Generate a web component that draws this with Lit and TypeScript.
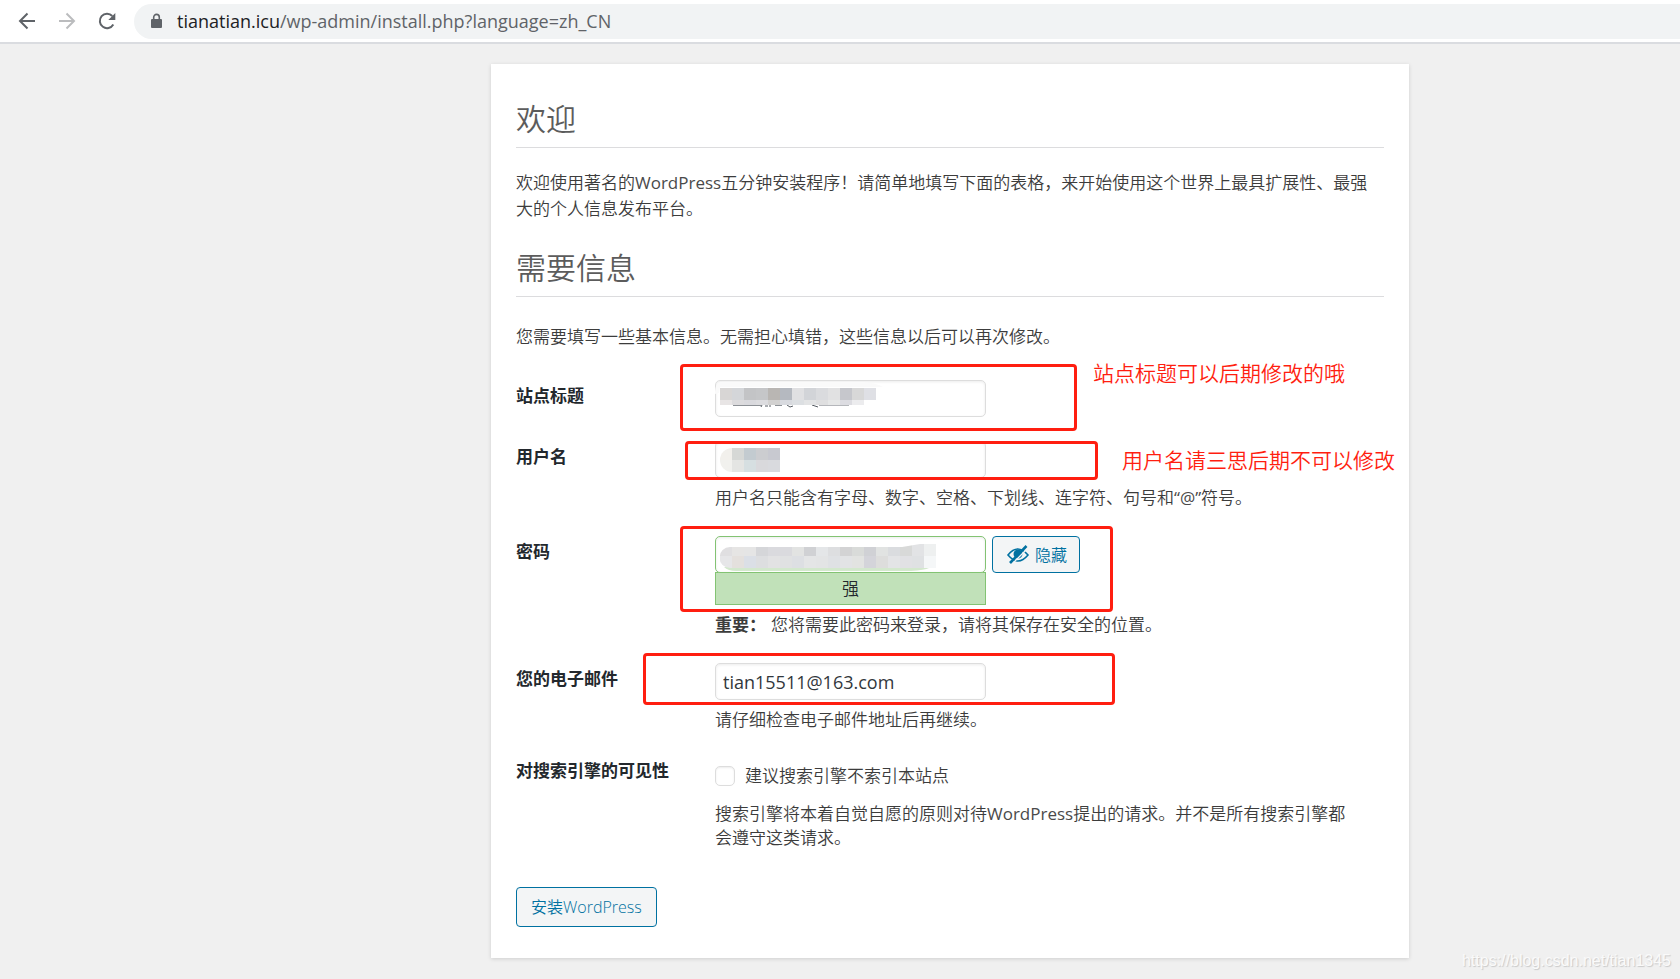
import { LitElement, html, css, svg } from "lit";
import { customElement, property } from "lit/decorators.js";

type Cells = string[][];

const TITLE_CELLS: Cells = [
  ["#d8d6d5", "#d4d6d9", "#c3c4c6", "#c5c6c8", "#b9b6b3", "#b5b9c0", "#e0e0e2", "#d2d4d8", "#dadbde", "#e1e1e2", "#c6c7cc", "#d8d8d8", "#dfe0e5"],
  ["#e8e5e5", "#dcdbdd", "#d9d9dd", "#dcdcdf", "#d2d1d0", "#d8dadf", "#dcdfe2", "#e3e4e5", "#dfdfe0", "#e6e7e7", "#dcdce1", "#ececee"],
];
const USER_CELLS: Cells = [
  ["#f2f0ec", "#d6d8d6", "#c3cbd0", "#cccdd0", "#c8c9d0"],
  ["#f1f1ee", "#e4e5e3", "#d6dfe1", "#d9d9dc", "#d9dade"],
];
const PASS_CELLS: Cells = [
  ["#e0dfe1", "#e6e5e4", "#e5e5e5", "#d5d6d9", "#dadade", "#dadade", "#e2e3e2", "#d0d1d4", "#e4e6e8", "#dddee0", "#d3d3d4", "#d9dbd9", "#d0d1d5", "#e1e3e2", "#dadcdf", "#d8d9d8", "#e2e3e5", "#eef0f0"],
  ["#e6e6e8", "#e4e0dd", "#dbdfe6", "#dddee0", "#e2e2e3", "#e0e1e2", "#dddfe3", "#e4e5e6", "#e3e4e5", "#dfe1e4", "#e2e3e5", "#e2e3e1", "#d4d4da", "#dddddc", "#e3e4e6", "#e1e1e4", "#dfe1e3", "#f5f7f8"],
];

const cells = (rows: Cells, x: number, y: number, split: number, bottom: number) =>
  rows.map((row, r) =>
    row.map((fill, c) => svg`<rect x=${x + c * 12} y=${r ? split : y} width="12" height=${r ? bottom - split : split - y} fill=${fill} />`)
  );

@customElement("browser-bar")
export class BrowserBar extends LitElement {
  static styles = css`
    :host {
      display: block;
      background: #fff;
      border-bottom: 2px solid #dadce0;
    }
    .bar {
      display: flex;
      align-items: center;
      height: 42px;
      padding-left: 17px;
    }
    .nav {
      display: flex;
      gap: 20px;
      margin-right: 17px;
    }
    button {
      display: block;
      width: 20px;
      height: 20px;
      padding: 0;
      border: 0;
      background: none;
      color: #5f6368;
    }
    button:disabled {
      color: #bbbcbe;
    }
    svg {
      display: block;
      fill: none;
      stroke: currentColor;
      stroke-width: 2;
    }
    .address {
      flex: 1;
      display: flex;
      align-items: center;
      gap: 15px;
      height: 35px;
      padding-left: 17px;
      border-radius: 18px 0 0 18px;
      background: #f1f3f4;
      color: #5f6368;
      font: 18px/24px "Open Sans", "Noto Sans", sans-serif;
    }
    b {
      font-weight: 400;
      color: #202124;
    }
  `;

  render() {
    return html`
      <nav class="bar">
        <div class="nav">
          <button aria-label="后退"><svg width="20" height="20" viewBox="0 0 20 20"><path d="M18 10H3M10.500 2.500L3 10l7.500 7.500" /></svg></button>
          <button aria-label="前进" disabled><svg width="20" height="20" viewBox="0 0 20 20"><path d="M2 10h15M9.500 2.500L17 10l-7.500 7.500" /></svg></button>
          <button aria-label="重新加载"><svg width="20" height="20" viewBox="0 0 20 20"><path d="M16.300 13.500A7.200 7.200 0 1 1 15.300 5" /><path d="M18.300 2v7h-7z" fill="currentColor" stroke="none" /></svg></button>
        </div>
        <div class="address">
          <svg width="11" height="16" viewBox="0 0 11 16"><rect x="0" y="6" width="11" height="9" rx="1" fill="currentColor" stroke="none" /><path d="M2.700 7V4.200a2.800 2.800 0 0 1 5.600 0V7" stroke-width="1.600" /></svg>
          <span><b>tianatian.icu</b>/wp-admin/install.php?language=zh_CN</span>
        </div>
      </nav>
    `;
  }
}

@customElement("app-root")
export class AppRoot extends LitElement {
  @property() email = "tian15511@163.com";

  static styles = css`
    :host {
      display: block;
      position: relative;
      min-height: 100vh;
      box-sizing: border-box;
      overflow: hidden;
      background: #f0f0f0;
      color: #3c3c3c;
      font: 350 17px/26px "Open Sans", "Noto Sans CJK SC", sans-serif;
    }
    * {
      box-sizing: border-box;
    }
    .page {
      padding: 20px 0 20px 220px;
    }
    .card {
      max-width: 918px;
      margin: 0 auto;
      padding: 31px 25px;
      background: #fff;
      box-shadow: 0 1px 4px rgba(0, 0, 0, 0.14);
    }
    h1 {
      margin: 0;
      padding-bottom: 4px;
      border-bottom: 1px solid #dcdcde;
      color: #5c5c5c;
      font-size: 30px;
      line-height: 48px;
      font-weight: 350;
    }
    .text {
      margin: 22px 0;
    }
    .latin {
      color: #4a4a4a;
      font-weight: 400;
    }
    .intro {
      margin: 27px 0 30px;
    }
    .rows {
      display: flex;
      flex-direction: column;
      gap: 24px;
    }
    .row {
      display: grid;
      grid-template-columns: 199px 1fr;
      line-height: 24px;
    }
    .name {
      padding-top: 1px;
      color: #23282d;
      font-weight: 700;
    }
    .boxed > .name {
      padding-top: 4px;
    }
    .field {
      position: relative;
    }
    .box {
      display: block;
      width: 271px;
      height: 37px;
      margin: 0;
      padding: 0 7px;
      border: 1px solid #ddd;
      border-radius: 5px;
      background: #fff;
      box-shadow: inset 0 1px 3px rgba(0, 0, 0, 0.08);
      color: #32373c;
      font: inherit;
      font-size: 18px;
      font-weight: 400;
    }
    .pass {
      border-color: #83c373;
    }
    .line {
      display: flex;
      gap: 6px;
    }
    .strength {
      width: 271px;
      height: 33px;
      margin-top: -1px;
      border: 1px solid #83c373;
      background: #c1e1b9;
      color: #23282d;
      line-height: 32px;
      text-align: center;
    }
    .hint {
      margin: 8px 0 2px;
    }
    .hint b {
      font-weight: 700;
      margin-right: 5px;
    }
    .btn {
      border: 1px solid #0071a1;
      border-radius: 4px;
      background: #f3f5f6;
      color: #0071a1;
      font: 350 16px/24px "Open Sans", "Noto Sans CJK SC", sans-serif;
      white-space: nowrap;
    }
    .hide {
      display: flex;
      align-items: center;
      gap: 4px;
      height: 37px;
      padding: 0 12px;
    }
    .install {
      display: block;
      height: 40px;
      margin-top: 35px;
      padding: 0 14px;
    }
    .tick {
      display: flex;
      align-items: center;
      gap: 10px;
      height: 36px;
    }
    .tick input {
      appearance: none;
      width: 20px;
      height: 20px;
      margin: 0;
      border: 1px solid #ddd;
      border-radius: 5px;
      background: #fff;
      box-shadow: inset 0 1px 2px rgba(0, 0, 0, 0.08);
    }
    .mosaic,
    .mark,
    .note {
      position: absolute;
      pointer-events: none;
    }
    .mosaic {
      left: 0;
      top: 0;
    }
    .mark {
      border: 3px solid #ff1e10;
      border-radius: 4px;
    }
    .mark-title {
      left: -35px;
      top: -16px;
      width: 397px;
      height: 67px;
    }
    .mark-user {
      left: -30px;
      top: 0;
      width: 413px;
      height: 39px;
    }
    .mark-pass {
      left: -35px;
      top: -10px;
      width: 433px;
      height: 86px;
    }
    .mark-mail {
      left: -72px;
      top: -10px;
      width: 472px;
      height: 52px;
    }
    .note {
      color: #ff1e10;
      font-size: 21px;
      line-height: 28px;
      white-space: nowrap;
    }
    .note-title {
      left: 378px;
      top: -21px;
    }
    .note-user {
      left: 407px;
      top: 5px;
    }
    .watermark {
      position: absolute;
      right: 9px;
      bottom: 8px;
      color: #fafafa;
      font: 16px/20px "Liberation Sans", sans-serif;
      text-shadow: 1px 1px 1px #c8c8c8;
    }
  `;

  render() {
    return html`
      <browser-bar></browser-bar>
      <main class="page">
        <div class="card">
          <h1>欢迎</h1>
          <p class="text">欢迎使用著名的<span class="latin">WordPress</span>五分钟安装程序！请简单地填写下面的表格，来开始使用这个世界上最具扩展性、最强<br />大的个人信息发布平台。</p>
          <h1>需要信息</h1>
          <p class="intro">您需要填写一些基本信息。无需担心填错，这些信息以后可以再次修改。</p>
          <form @submit=${(e: Event) => e.preventDefault()}>
            <div class="rows">
              <div class="row boxed">
                <label class="name" for="title">站点标题</label>
                <div class="field">
                  <input class="box" id="title" type="text" />
                  <svg class="mosaic" width="271" height="37">
                    <path d="M0 14C0 6 2 2 8 2h140q14 1 20 5H5L4 13z" fill="#fafafa" />
                    <path d="M18 25.500h28M60 25.500h7" stroke="#8d9196" />
                    <path d="M47 25l-1 2M50 26h3M55 25v2M72 25l3 2M78 26l-3 1M97 25l6 2" stroke="#555b62" fill="none" />
                    <path d="M104 25.500h30" stroke="#b5b7bb" />
                    ${cells(TITLE_CELLS, 5, 8, 20, 25)}
                  </svg>
                  <div class="mark mark-title"></div>
                  <div class="note note-title">站点标题可以后期修改的哦</div>
                </div>
              </div>
              <div class="row boxed">
                <label class="name" for="user">用户名</label>
                <div class="field">
                  <input class="box" id="user" type="text" />
                  <svg class="mosaic" width="271" height="37">
                    <clipPath id="userclip"><path d="M17 7h48v24H17a12 12 0 0 1 0-24z" /></clipPath>
                    <g clip-path="url(#userclip)">${cells(USER_CELLS, 5, 7, 19, 31)}</g>
                  </svg>
                  <p class="hint">用户名只能含有字母、数字、空格、下划线、连字符、句号和<span class="latin">“@”</span>符号。</p>
                  <div class="mark mark-user"></div>
                  <div class="note note-user">用户名请三思后期不可以修改</div>
                </div>
              </div>
              <div class="row boxed">
                <label class="name" for="pass">密码</label>
                <div class="field">
                  <div class="line">
                    <input class="box pass" id="pass" type="text" />
                    <button class="btn hide" type="button">
                      <svg width="26" height="22" viewBox="0 0 26 22" fill="none" stroke="#0071a1">
                        <path d="M3 11q9.500-12 20 0q-10 12-20 0z" stroke-width="1.600" />
                        <circle cx="13" cy="10" r="4.500" fill="#0071a1" stroke="none" />
                        <path d="M7.500 19.500L23 4" stroke="#f3f5f6" stroke-width="1.500" />
                        <path d="M5 19L21.500 2" stroke-width="2.600" />
                      </svg>
                      隐藏
                    </button>
                  </div>
                  <svg class="mosaic" width="271" height="37">
                    <clipPath id="passclip"><path d="M15 11h172l18-3h16v24H15a10 10 0 0 1 0-21z" /></clipPath>
                    <path d="M9 31q4 4 12 4h175q14-1 18-3z" fill="#d3e8cd" />
                    <g clip-path="url(#passclip)">${cells(PASS_CELLS, 5, 8, 20, 32)}</g>
                  </svg>
                  <div class="strength">强</div>
                  <p class="hint"><b>重要：</b>您将需要此密码来登录，请将其保存在安全的位置。</p>
                  <div class="mark mark-pass"></div>
                </div>
              </div>
              <div class="row boxed">
                <label class="name" for="mail">您的电子邮件</label>
                <div class="field">
                  <input class="box" id="mail" type="email" .value=${this.email} />
                  <p class="hint">请仔细检查电子邮件地址后再继续。</p>
                  <div class="mark mark-mail"></div>
                </div>
              </div>
              <div class="row">
                <span class="name">对搜索引擎的可见性</span>
                <div class="field">
                  <label class="tick"><input type="checkbox" />建议搜索引擎不索引本站点</label>
                  <p class="hint">搜索引擎将本着自觉自愿的原则对待<span class="latin">WordPress</span>提出的请求。并不是所有搜索引擎都<br />会遵守这类请求。</p>
                </div>
              </div>
            </div>
            <button class="btn install" type="submit">安装WordPress</button>
          </form>
        </div>
      </main>
      <div class="watermark">https://blog.csdn.net/tian1345</div>
    `;
  }
}
